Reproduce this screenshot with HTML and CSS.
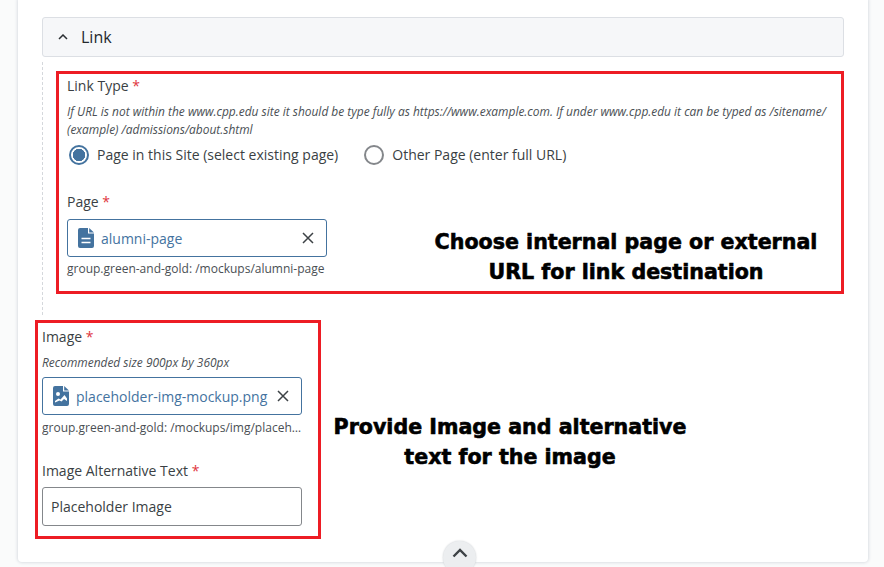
FILE: index.html
```html
<!DOCTYPE html>
<html lang="en">
<head>
<meta charset="utf-8">
<title>Link and image fields</title>
<link rel="stylesheet" href="styles.css">
</head>
<body>
<main class="card">
  <div class="acc-head">
    <svg class="chev" viewBox="0 0 10 6" width="10" height="6"><path d="M1 5l4-4 4 4" fill="none" stroke="#2b2f33" stroke-width="1.5"/></svg>
    <span>Link</span>
  </div>
  <section class="acc-body">
    <div class="mark mark-link">
      <div class="label lbl-first">Link Type <span class="req">*</span></div>
      <p class="help">If URL is not within the www.cpp.edu site it should be type fully as https://www.example.com. If under www.cpp.edu it can be typed as /sitename/ (example) /admissions/about.shtml</p>
      <div class="radios">
        <span class="radio"><span class="dot dot-on"></span>Page in this Site (select existing page)</span>
        <span class="radio"><span class="dot"></span>Other Page (enter full URL)</span>
      </div>
      <div class="label lbl-page">Page <span class="req">*</span></div>
      <div class="chip">
        <svg class="fi" viewBox="0 0 16 20" width="16" height="20"><path fill="#44739f" d="M2 0h8v5.500h6V18a2 2 0 0 1-2 2H2a2 2 0 0 1-2-2V2a2 2 0 0 1 2-2z"/><path fill="#44739f" d="M11.200 0L16 4.400h-4.800z"/><path stroke="#fff" stroke-width="1.600" d="M3.500 10.500h9M3.500 14.500h9"/></svg>
        <span class="chip-text">alumni-page</span>
        <svg class="x" viewBox="0 0 12 12" width="12" height="12"><path d="M1 1l10 10M11 1L1 11" stroke="#3d4246" stroke-width="1.500"/></svg>
      </div>
      <div class="path">group.green-and-gold: /mockups/alumni-page</div>
      <div class="note note-link">Choose internal page or external<br>URL for link destination</div>
    </div>
  </section>
  <div class="mark mark-image">
    <div class="label">Image <span class="req">*</span></div>
    <p class="help help-img">Recommended size 900px by 360px</p>
    <div class="chip chip-img">
      <svg class="fi" viewBox="0 0 16 20" width="16" height="20"><path fill="#44739f" d="M2 0h8v5.500h6V18a2 2 0 0 1-2 2H2a2 2 0 0 1-2-2V2a2 2 0 0 1 2-2z"/><path fill="#44739f" d="M11.200 0L16 4.400h-4.800z"/><circle cx="5" cy="8" r="2" fill="#fff"/><path fill="#fff" d="M2 16.500V15l3.500-2.500 2 1 4-4.500 2.500 3.500v2.500l-3-2-2.500 2.500-2-1z"/></svg>
      <span class="chip-text">placeholder-img-mockup.png</span>
      <svg class="x" viewBox="0 0 12 12" width="12" height="12"><path d="M1 1l10 10M11 1L1 11" stroke="#3d4246" stroke-width="1.500"/></svg>
    </div>
    <div class="path path-trunc">group.green-and-gold: /mockups/img/placeholder-img-mockup.png</div>
    <div class="label lbl-alt">Image Alternative Text <span class="req">*</span></div>
    <div class="input">Placeholder Image</div>
    <div class="note note-image">Provide Image and alternative<br>text for the image</div>
  </div>
  <button class="collapse" aria-label="Collapse">
    <svg viewBox="0 0 16 10" width="16" height="10"><path d="M1.500 8.500L8 2l6.500 6.500" fill="none" stroke="#3d4246" stroke-width="2.400"/></svg>
  </button>
</main>
</body>
</html>
```
FILE: styles.css
```css
* { box-sizing: border-box; }
html, body { margin: 0; height: 567px; overflow: hidden; }
body {
  background: #fafbfb;
  font-family: "Open Sans", "Liberation Sans", sans-serif;
  color: #3a3f44;
  font-size: 14px;
}
.card {
  position: relative;
  width: 850px;
  height: 562px;
  margin-left: 18px;
  padding: 17px 24px 0;
  background: #fff;
  border-radius: 0 0 4px 4px;
  box-shadow: 0 0 3px 1px #dcdfe4;
}
.acc-head {
  display: flex;
  align-items: center;
  gap: 13px;
  height: 40px;
  padding-left: 15px;
  background: #f6f7f9;
  border: 1px solid #dcdfe4;
  border-radius: 3px;
  font-size: 16px;
  color: #25292d;
}
.acc-body {
  margin-top: 5px;
  height: 253px;
  padding: 9px 0 0 13px;
  border-left: 1px dashed #d5d8dc;
}
.mark {
  border: 3px solid #ed1c24;
}
.mark-link {
  position: relative;
  height: 223px;
  padding: 2px 8px 0;
}
.mark-image {
  position: relative;
  width: 286px;
  height: 219px;
  margin: 5px 0 0 -7px;
  padding: 4px 4px 0;
}
.label { line-height: 20px; color: #3a3f44; }
.req { color: #e0353c; }
.help {
  margin: 6px 0 0;
  font-size: 11.940px;
  font-style: italic;
  line-height: 18px;
  color: #4a4f54;
}
.radios { display: flex; gap: 24px; margin-top: 5px; }
.radio { display: flex; align-items: center; gap: 8px; line-height: 24px; color: #3a3f44; }
.dot {
  width: 20px;
  height: 20px;
  margin-left: 2px;
  border: 2px solid #84878b;
  border-radius: 50%;
}
.dot-on {
  border-color: #44739f;
  background: radial-gradient(circle, #44739f 0 6px, #fff 6.500px);
}
.lbl-page { margin-top: 25px; }
.chip {
  display: flex;
  align-items: center;
  width: 260px;
  height: 38px;
  margin-top: 7px;
  padding: 0 12px 0 10px;
  border: 1px solid #44739f;
  border-radius: 3px;
}
.chip-img { margin-top: 6px; }
.chip-text { flex: 1; margin-left: 7px; color: #44739f; white-space: nowrap; }
.x { flex: none; }
.path {
  margin-top: 4px;
  font-size: 12px;
  line-height: 16px;
  color: #4a4f54;
}
.path-trunc {
  width: 260px;
  margin-top: 5px;
  overflow: hidden;
  white-space: nowrap;
  text-overflow: ellipsis;
}
.lbl-alt { margin-top: 25px; }
.input {
  display: flex;
  align-items: center;
  width: 260px;
  height: 39px;
  margin-top: 6px;
  padding-left: 8px;
  border: 1px solid #84878b;
  border-radius: 3px;
  color: #3a3f44;
}
.note {
  position: absolute;
  transform: translateX(-50%);
  font-family: "DejaVu Sans", sans-serif;
  font-size: 20.600px;
  font-weight: 700;
  line-height: 30px;
  text-align: center;
  white-space: nowrap;
  color: #000;
  -webkit-text-stroke: 0.600px #000;
}
.note-link { left: 567px; top: 153px; }
.note-image { left: 472px; top: 89px; }
.collapse {
  position: absolute;
  left: 425px;
  top: 541px;
  width: 33px;
  height: 33px;
  padding: 0 0 8px;
  border: 0;
  border-radius: 50%;
  background: #eceef0;
  box-shadow: 0 0 2px #c8ccd0;
}
```
